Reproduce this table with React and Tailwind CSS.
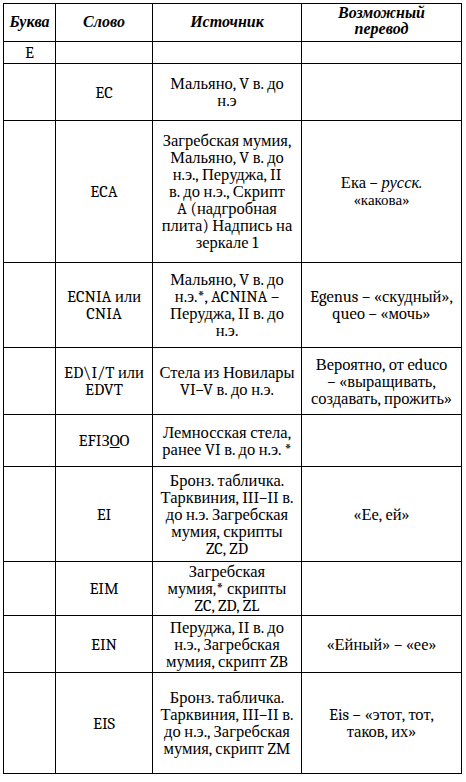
import React from 'react';

const rows = [
  { h: 'h-[22px]', letter: ['E'], word: [], source: [], tr: [] },
  { h: 'h-[57px]', word: ['EC'], source: ['Мальяно, V в. до', 'н.э'], tr: [] },
  {
    h: 'h-[142px]',
    word: ['ECA'],
    source: [
      'Загребская мумия,',
      'Мальяно, V в. до',
      'н.э., Перуджа, II',
      'в. до н.э., Скрипт',
      'A (надгробная',
      'плита) Надпись на',
      'зеркале 1',
    ],
    tr: [
      <>
        Ека – <i>русск.</i>
      </>,
      <span className="text-[15px]">«какова»</span>,
    ],
  },
  {
    h: 'h-[85px]',
    word: ['ECNIA или', 'CNIA'],
    source: ['Мальяно, V в. до', 'н.э.*, ACNINA –', 'Перуджа, II в. до', 'н.э.'],
    tr: ['Egenus – «скудный»,', 'queo – «мочь»'],
  },
  {
    h: 'h-[67px]',
    word: ['ED\\I/T или', 'EDVT'],
    source: ['Стела из Новилары', 'VI–V в. до н.э.'],
    tr: ['Вероятно, от educo', '– «выращивать,', 'создавать, прожить»'],
  },
  {
    h: 'h-[52px]',
    word: [
      <>
        EFIЗ<span className="underline">O</span>O
      </>,
    ],
    source: ['Лемносская стела,', 'ранее VI в. до н.э. *'],
    tr: [],
  },
  {
    h: 'h-[95px]',
    word: ['EI'],
    source: ['Бронз. табличка.', 'Тарквиния, III–II в.', 'до н.э. Загребская', 'мумия, скрипты', 'ZC, ZD'],
    tr: ['«Ее, ей»'],
  },
  { h: 'h-[54px]', word: ['EIM'], source: ['Загребская', 'мумия,* скрипты', 'ZC, ZD, ZL'], tr: [] },
  {
    h: 'h-[57px]',
    word: ['EIN'],
    source: ['Перуджа, II в. до', 'н.э., Загребская', 'мумия, скрипт ZB'],
    tr: ['«Ейный» – «ее»'],
  },
  {
    h: 'h-[101px]',
    word: ['EIS'],
    source: ['Бронз. табличка.', 'Тарквиния, III–II в.', 'до н.э., Загребская', 'мумия, скрипт ZM'],
    tr: ['Eis – «этот, тот,', 'таков, их»'],
  },
];

const row = 'grid grid-cols-[52px_97px_149px_160px]';
const cell = 'border-l border-t border-black flex items-center justify-center text-center whitespace-nowrap';

function Lines({ lines = [] }) {
  return (
    <div>
      {lines.map((line, i) => (
        <div key={i}>{line}</div>
      ))}
    </div>
  );
}

export default function App() {
  return (
    <div className="w-[466px] h-[782px] bg-white pt-[3px] pl-[3px] font-serif text-[16.5px] leading-[17px] text-black">
      <div className="w-[459px] border-r border-b border-black">
        {/* Header */}
        <div className={`${row} h-[38px] font-bold italic text-[16px]`}>
          <div className={cell}>Буква</div>
          <div className={cell}>Слово</div>
          <div className={cell}>Источник</div>
          <div className={`${cell} leading-[16px] pb-[3px]`}>
            <Lines lines={['Возможный', 'перевод']} />
          </div>
        </div>

        {rows.map((r, i) => (
          <div key={i} className={`${row} ${r.h}`}>
            <div className={cell}>
              <Lines lines={r.letter} />
            </div>
            <div className={cell}>
              <Lines lines={r.word} />
            </div>
            <div className={cell}>
              <Lines lines={r.source} />
            </div>
            <div className={cell}>
              <Lines lines={r.tr} />
            </div>
          </div>
        ))}
      </div>
    </div>
  );
}
